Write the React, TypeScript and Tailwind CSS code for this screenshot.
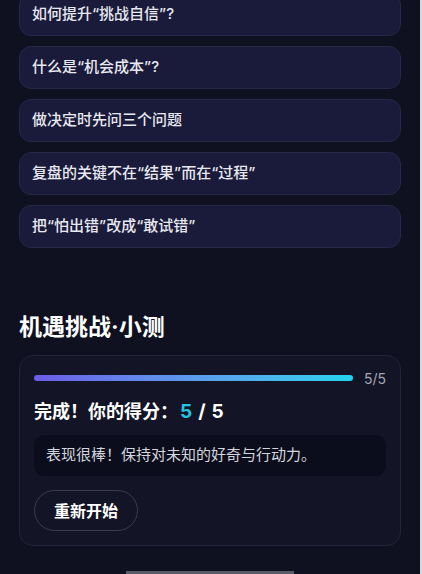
import React from "react";

const items = [
  "如何提升“挑战自信”?",
  "什么是“机会成本”?",
  "做决定时先问三个问题",
  "复盘的关键不在“结果”而在“过程”",
  "把“怕出错”改成“敢试错”",
];

export default function App() {
  const font = { fontFamily: 'Inter, "Noto Sans CJK SC", sans-serif' };
  return (
    <div className="flex h-[574px] w-[422px] overflow-hidden bg-[#0f1120]" style={font}>
      <div className="flex w-[420px] flex-col px-[19px]">
        <div className="mt-[-7px] flex flex-col gap-[10px]">
          {items.map((t) => (
            <div
              key={t}
              className="flex h-[43px] items-center rounded-[12px] border border-[#262848] bg-[#1a1a3a] px-[12px] text-[15px] font-medium text-[#e8e9f0]"
            >
              {t}
            </div>
          ))}
        </div>

        <h2 className="mt-[64px] text-[23px] font-bold leading-[30px] text-white">机遇挑战·小测</h2>

        <div className="mt-[13px] flex flex-col rounded-[14px] border border-[#22253a] bg-[#131526] px-[14px] pb-[14px] pt-[12px]">
          <div className="flex h-[20px] items-center gap-[11px]">
            <div className="h-[6px] flex-1 rounded-full bg-gradient-to-r from-[#6b5ce7] to-[#22d3ee]" />
            <span className="text-[14px] text-[#a3a6b4]">5/5</span>
          </div>
          <div className="mt-[11px] flex items-center text-[18px] font-bold leading-[26px] text-white">
            <span>完成！你的得分：</span>
            <span className="ml-[2px] text-[19px] text-[#22c5e0]">5</span>
            <span className="mx-[6px] text-[19px]">/</span>
            <span className="text-[19px]">5</span>
          </div>
          <div className="mt-[10px] flex h-[41px] items-center rounded-[10px] bg-[#0b0d1c] px-[12px] text-[15px] text-[#d4d6de]">
            表现很棒！保持对未知的好奇与行动力。
          </div>
          <div className="mt-[14px] flex">
            <button className="flex h-[41px] items-center rounded-full border border-[#3a3d50] px-[19px] text-[16px] font-bold text-white">
              重新开始
            </button>
          </div>
        </div>

        <div className="mx-auto mt-[25px] h-[4px] w-[168px] bg-[#5a5b66]" />
      </div>
      <div className="w-[2px] bg-[#d6d6d8]" />
    </div>
  );
}
